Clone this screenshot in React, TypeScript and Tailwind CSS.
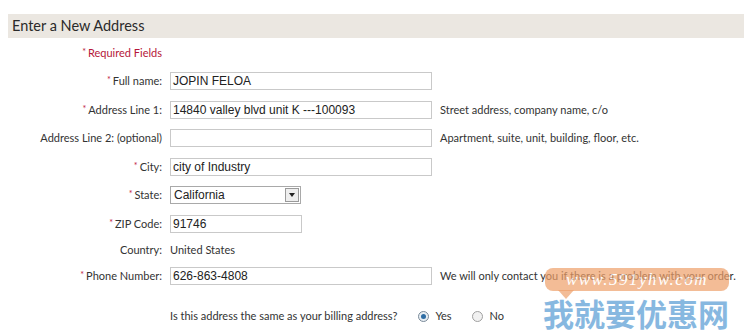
import React from "react";

const gothic = { fontFamily: "Lato, 'Noto Sans', sans-serif" };

function Star() {
  return <span className="text-[#c0223f] text-[9px] align-top mr-[2px]">*</span>;
}

function Row({
  label,
  req,
  children,
  hint,
  h = "h-[28.5px]",
}: {
  label: string;
  req?: boolean;
  children: React.ReactNode;
  hint?: string;
  h?: string;
}) {
  return (
    <div className={`flex items-center ${h}`}>
      <div className="w-[162px] text-right text-[11px] text-[#333]" style={gothic}>
        {req && <Star />}
        {label}
      </div>
      <div className="ml-[8px] flex items-center">{children}</div>
      {hint && (
        <div className="ml-[8px] text-[11px] text-[#333] whitespace-nowrap" style={gothic}>
          {hint}
        </div>
      )}
    </div>
  );
}

function Input({ value, w = "w-[262px]" }: { value: string; w?: string }) {
  return (
    <div
      className={`${w} h-[18px] border border-[#c9c9c9] bg-white flex items-center pl-[2px] text-[12px] text-[#222]`}
      style={{ fontFamily: "'Liberation Sans', Arial, sans-serif" }}
    >
      {value}
    </div>
  );
}

export default function App() {
  return (
    <div className="relative w-[744px] h-[333px] bg-white overflow-hidden">
      <div className="pt-[14px] pl-[8px]">
        <div className="h-[24px] bg-[#ebe7e1] flex items-center pl-[4px]">
          <span className="text-[14.5px] text-[#2a2a2a]" style={gothic}>
            Enter a New Address
          </span>
        </div>
      </div>
      <div className="h-[29px] flex items-center">
        <div className="w-[162px] text-right text-[11px] text-[#b5173a] pt-[2px]" style={gothic}>
          <span className="text-[9px] align-top mr-[2px]">*</span>Required Fields
        </div>
      </div>
      <Row label="Full name:" req>
        <Input value="JOPIN FELOA" />
      </Row>
      <Row label="Address Line 1:" req hint="Street address, company name, c/o">
        <Input value="14840 valley blvd unit K ---100093" />
      </Row>
      <Row label="Address Line 2: (optional)" hint="Apartment, suite, unit, building, floor, etc.">
        <Input value="" />
      </Row>
      <Row label="City:" req>
        <Input value="city of Industry" />
      </Row>
      <Row label="State:" req>
        <div
          className="w-[131px] h-[18px] border border-[#a9a9a9] bg-white flex items-center justify-between pl-[3px] pr-[1px] text-[12px] text-[#222]"
          style={{ fontFamily: "'Liberation Sans', Arial, sans-serif" }}
        >
          <span>California</span>
          <span className="w-[14px] h-[14px] border border-[#9a9a9a] bg-[#eeeeee] flex items-center justify-center">
            <span className="w-0 h-0 border-l-[3px] border-r-[3px] border-t-[4px] border-l-transparent border-r-transparent border-t-[#222]" />
          </span>
        </div>
      </Row>
      <Row label="ZIP Code:" req>
        <Input value="91746" w="w-[132px]" />
      </Row>
      <Row label="Country:" h="h-[24px]">
        <span className="text-[11px] text-[#333]" style={gothic}>
          United States
        </span>
      </Row>
      <Row label="Phone Number:" req hint="We will only contact you if there is a problem with your order.">
        <Input value="626-863-4808" />
      </Row>
      <div className="flex items-center mt-[17px] h-[18px] pl-[170px] text-[11px] text-[#333]" style={gothic}>
        <span>Is this address the same as your billing address?</span>
        <span className="ml-[21px] w-[11px] h-[11px] rounded-full border border-[#7a8a99] bg-[#e8eef3] flex items-center justify-center">
          <span className="w-[5px] h-[5px] rounded-full bg-[#2e6da4]" />
        </span>
        <span className="ml-[6px]">Yes</span>
        <span className="ml-[20px] w-[11px] h-[11px] rounded-full border border-[#a0a0a0] bg-[#f1f1f1]" />
        <span className="ml-[7px]">No</span>
      </div>

      {/* watermark */}
      <div className="absolute left-[545px] top-[268px] w-[184px] h-[23px] rounded-[8px] bg-[#eea06a] opacity-70 flex items-center justify-center">
        <span
          className="text-[17px] italic text-white tracking-[1.5px]"
          style={{ fontFamily: "'Liberation Serif', serif" }}
        >
          www.591yhw.com
        </span>
      </div>
      <div className="absolute left-[558px] top-[290px] w-0 h-0 border-l-[8px] border-r-[8px] border-t-[9px] border-l-transparent border-r-transparent border-t-[#eea06a] opacity-70" />
      <div
        className="absolute left-[543px] top-[297px] text-[31px] font-bold text-[#6aa7d9] opacity-80 leading-none"
        style={{ fontFamily: "'Noto Sans CJK SC', sans-serif" }}
      >
        我就要优惠网
      </div>
    </div>
  );
}
